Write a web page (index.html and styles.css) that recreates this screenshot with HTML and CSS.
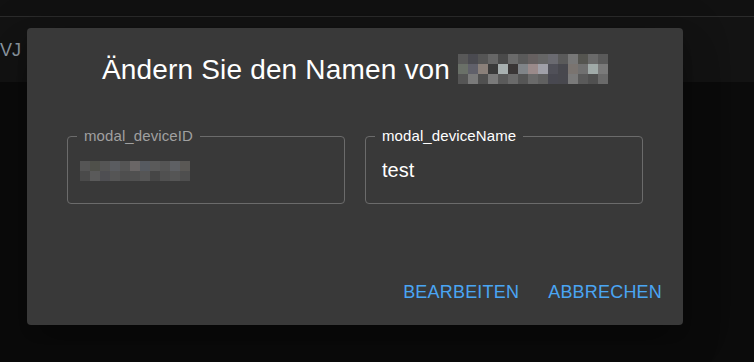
FILE: index.html
```html
<!DOCTYPE html>
<html lang="de">
<head>
<meta charset="utf-8">
<title>Gerät umbenennen</title>
<link rel="stylesheet" href="styles.css">
</head>
<body>
<div class="topbar"></div>
<div class="appbar"><span class="appbar-text">VJ</span></div>

<div class="dialog" role="dialog">
  <div class="dialog-title">
    <span class="title-text">Ändern Sie den Namen von</span>
    <div class="pixels pixels-title">
      <i style="background:#585858"></i><i style="background:#4a4a50"></i><i style="background:#555555"></i><i style="background:#666666"></i><i style="background:#4a4a4a"></i><i style="background:#6a6a6a"></i><i style="background:#5a5a5a"></i><i style="background:#666060"></i><i style="background:#666666"></i><i style="background:#6a6a70"></i><i style="background:#5a5a5a"></i><i style="background:#777777"></i><i style="background:#555550"></i><i style="background:#6a6a6a"></i><i style="background:#5a5a5a"></i>
      <i style="background:#6a7068"></i><i style="background:#60606a"></i><i style="background:#8a807a"></i><i style="background:#3a3a3a"></i><i style="background:#a8b0b0"></i><i style="background:#3a3636"></i><i style="background:#808488"></i><i style="background:#9a8a8a"></i><i style="background:#a0a0a8"></i><i style="background:#505058"></i><i style="background:#48484e"></i><i style="background:#7a7470"></i><i style="background:#707070"></i><i style="background:#a0aaa8"></i><i style="background:#7a7a7a"></i>
      <i style="background:#555555"></i><i style="background:#7a7a7a"></i><i style="background:#505050"></i><i style="background:#7a7a7a"></i><i style="background:#5a5a5a"></i><i style="background:#6a6a6a"></i><i style="background:#555555"></i><i style="background:#6a6a6a"></i><i style="background:#606060"></i><i style="background:#484850"></i><i style="background:#48484e"></i><i style="background:#7a7a7a"></i><i style="background:#5a5a5a"></i><i style="background:#505050"></i><i style="background:#6a6a6a"></i>
    </div>
  </div>

  <div class="fields">
    <fieldset class="field">
      <legend class="field-label muted">modal_deviceID</legend>
      <div class="field-input field-input-id">
        <div class="pixels pixels-id">
          <i style="background:#555555"></i><i style="background:#4f504a"></i><i style="background:#555555"></i><i style="background:#5a5c60"></i><i style="background:#555555"></i><i style="background:#6a6666"></i><i style="background:#565a60"></i><i style="background:#5a5a5a"></i><i style="background:#555555"></i><i style="background:#5e6064"></i><i style="background:#5a5855"></i>
          <i style="background:#4a4a4a"></i><i style="background:#5a5a5a"></i><i style="background:#4e4e52"></i><i style="background:#555555"></i><i style="background:#4e4e4e"></i><i style="background:#505050"></i><i style="background:#555555"></i><i style="background:#464646"></i><i style="background:#505050"></i><i style="background:#555555"></i><i style="background:#4e4e4e"></i>
        </div>
      </div>
    </fieldset>
    <fieldset class="field">
      <legend class="field-label">modal_deviceName</legend>
      <div class="field-input">test</div>
    </fieldset>
  </div>

  <div class="actions">
    <button class="btn" type="button">Bearbeiten</button>
    <button class="btn" type="button">Abbrechen</button>
  </div>
</div>
</body>
</html>
```

FILE: styles.css
```css
* { box-sizing: border-box; }

html, body {
  margin: 0;
  height: 100%;
}

body {
  background: #0b0b0b;
  font-family: "Liberation Sans", Arial, sans-serif;
  color: #ffffff;
  overflow: hidden;
}

.topbar {
  height: 17px;
  background: #111111;
  border-bottom: 1px solid #2b2b2b;
}

.appbar {
  height: 65px;
  background: #131313;
  display: flex;
  align-items: flex-start;
  padding-top: 22px;
}

.appbar-text {
  font-size: 18px;
  line-height: 22px;
  color: #8d98a2;
}

.dialog {
  position: absolute;
  left: 27px;
  top: 28px;
  width: 656px;
  height: 297px;
  background: #393939;
  border-radius: 4px;
  box-shadow: 0 11px 15px -7px rgba(0,0,0,0.2), 0 24px 38px 3px rgba(0,0,0,0.14), 0 9px 46px 8px rgba(0,0,0,0.12);
  display: flex;
  flex-direction: column;
  padding: 26px 13px 16px 40px;
}

.dialog-title {
  display: flex;
  justify-content: center;
  align-items: flex-start;
  gap: 8px;
  height: 30px;
  padding-right: 27px;
}

.title-text {
  font-size: 28px;
  line-height: 30px;
  letter-spacing: 0.17px;
  margin-top: 1px;
  white-space: nowrap;
}

.pixels {
  display: grid;
  flex: none;
}

.pixels i {
  display: block;
  width: 10px;
  height: 10px;
}

.pixels-title {
  grid-template-columns: repeat(15, 10px);
}

.pixels-id {
  grid-template-columns: repeat(11, 10px);
}

.fields {
  display: grid;
  grid-template-columns: 278px 278px;
  gap: 20px;
  margin-top: 44px;
}

.field {
  margin: 0;
  padding: 0;
  min-width: 0;
  border: 1px solid #6b6b6b;
  border-radius: 4px;
}

.field-label {
  margin-left: 9px;
  padding: 0 7px;
  font-size: 15px;
  line-height: 16px;
  letter-spacing: 0.1px;
  color: #ffffff;
}

.field-label.muted {
  color: #a0a0a0;
}

.field-input {
  height: 59px;
  padding: 14px 16px 0;
  font-size: 20px;
  line-height: 24px;
  color: #ffffff;
}

.field-input-id {
  padding: 17px 12px 0;
}

.actions {
  margin-top: auto;
  display: flex;
  justify-content: flex-end;
  gap: 13px;
}

.btn {
  background: none;
  border: 0;
  padding: 6px 8px;
  font-family: "Liberation Sans", Arial, sans-serif;
  font-size: 18px;
  line-height: 22px;
  letter-spacing: 0.2px;
  text-transform: uppercase;
  color: #4aa5f3;
  cursor: pointer;
}
```
